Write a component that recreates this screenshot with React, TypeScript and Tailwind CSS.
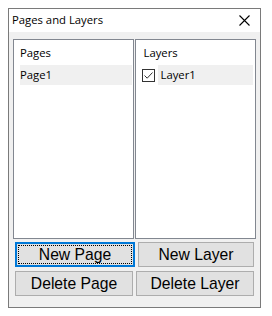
const ui = { fontFamily: '"Segoe UI", "Open Sans", "Noto Sans", sans-serif' };
const btnFont = { fontFamily: '"Liberation Sans", Arial, sans-serif' };

function CloseIcon() {
  return (
    <svg width="11" height="11" viewBox="0 0 11 11" className="text-black">
      <path d="M0.5 0.5 L10.5 10.5 M10.5 0.5 L0.5 10.5" stroke="currentColor" strokeWidth="1.1" fill="none" />
    </svg>
  );
}

function CheckBox() {
  return (
    <span className="flex h-[13px] w-[13px] shrink-0 items-center justify-center border border-[#333] bg-white">
      <svg width="11" height="11" viewBox="0 0 11 11">
        <path d="M1.5 5.5 L4.2 8.2 L9.5 2.5" stroke="#333" strokeWidth="1" fill="none" />
      </svg>
    </span>
  );
}

function Button({ label, focused }: { label: string; focused?: boolean }) {
  return (
    <div
      className={
        focused
          ? "flex h-[25px] flex-1 items-center justify-center border-2 border-[#0078d7] bg-[#e1e1e1] p-px"
          : "flex h-[25px] flex-1 items-center justify-center border border-[#adadad] bg-[#e1e1e1]"
      }
      style={btnFont}
    >
      {focused ? (
        <div className="flex h-full w-full items-center justify-center border border-dotted border-black text-[15.7px] text-black">
          {label}
        </div>
      ) : (
        <span className="text-[15.7px] text-black">{label}</span>
      )}
    </div>
  );
}

export default function App() {
  return (
    <div className="h-[316px] w-[272px] bg-white pl-2 pt-[8px]">
      <div className="flex h-[300px] w-[253px] flex-col border border-[#7a7a7a]" style={ui}>
        <div className="flex h-[23px] items-center justify-between bg-white pl-[3px] pr-[10px]">
          <span className="text-[11.3px] text-black">Pages and Layers</span>
          <CloseIcon />
        </div>
        <div className="flex flex-1 flex-col bg-[#f0f0f0] px-[4px] pt-[7px] pb-[11px]">
          <div className="flex h-[200px] gap-px">
            <div className="flex flex-1 flex-col border border-[#828790] bg-white pl-[6px] pr-px pt-[2px]">
              <div className="flex h-[23px] items-center text-[11.3px] text-black">Pages</div>
              <div className="flex h-[20px] items-center bg-[#f0f0f0] text-[11.3px] text-black">Page1</div>
            </div>
            <div className="flex flex-1 flex-col border border-[#828790] bg-white pl-[6px] pr-[2px] pt-[2px]">
              <div className="flex h-[23px] items-center pl-[2px] text-[11.3px] text-black">Layers</div>
              <div className="flex h-[20px] items-center gap-[3px]">
                <CheckBox />
                <div className="flex h-full flex-1 items-center bg-[#f0f0f0] pl-[3px] text-[11.3px] text-black">Layer1</div>
              </div>
            </div>
          </div>
          <div className="mt-[3px] flex flex-col gap-[4px] px-[2px]">
            <div className="flex gap-[3px]">
              <Button label="New Page" focused />
              <Button label="New Layer" />
            </div>
            <div className="flex gap-[3px]">
              <Button label="Delete Page" />
              <Button label="Delete Layer" />
            </div>
          </div>
        </div>
      </div>
    </div>
  );
}
